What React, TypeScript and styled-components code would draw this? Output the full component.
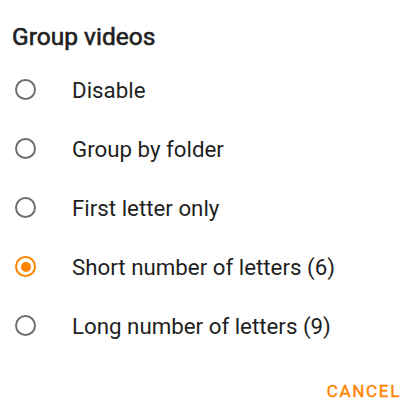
import React, { useState } from "react";
import styled, { createGlobalStyle } from "styled-components";

const Global = createGlobalStyle`
  html, body { margin: 0; padding: 0; background: #ffffff; }
  body { font-family: Roboto, "Noto Sans", "Liberation Sans", sans-serif; }
`;

const Dialog = styled.div`
  width: 409px;
  height: 415px;
  background: #ffffff;
  display: flex;
  flex-direction: column;
  box-sizing: border-box;
  padding-top: 23px;
`;

const Title = styled.h2`
  margin: 0 0 9px 0;
  padding: 0 12px;
  font-family: Roboto, "Noto Sans", sans-serif;
  font-size: 24.5px;
  line-height: 28px;
  font-weight: 400;
  -webkit-text-stroke: 0.6px #1f1f1f;
  color: #1f1f1f;
`;

const List = styled.div`
  display: flex;
  flex-direction: column;
`;

const Row = styled.label`
  display: flex;
  align-items: center;
  height: 59px;
  padding-left: 15px;
  gap: 36px;
  cursor: pointer;
`;

const Radio = styled.span<{ $checked: boolean }>`
  width: 21px;
  height: 21px;
  box-sizing: border-box;
  border-radius: 50%;
  border: 2px solid ${(p) => (p.$checked ? "#ff8400" : "#6e6e6e")};
  display: flex;
  align-items: center;
  justify-content: center;
  flex-shrink: 0;
  &::after {
    content: "";
    width: 10px;
    height: 10px;
    border-radius: 50%;
    background: #ff8400;
    display: ${(p) => (p.$checked ? "block" : "none")};
  }
`;

const Label = styled.span`
  font-size: 22.3px;
  line-height: 26px;
  color: #1f1f1f;
`;

const Footer = styled.div`
  display: flex;
  justify-content: flex-end;
  align-items: center;
  height: 48px;
  margin-top: 12px;
  padding-right: 8px;
`;

const Button = styled.button`
  border: none;
  background: transparent;
  padding: 0;
  font-family: Roboto, "Noto Sans", sans-serif;
  font-size: 17px;
  font-weight: 400;
  -webkit-text-stroke: 0.45px #ff8400;
  letter-spacing: 1.7px;
  color: #ff8400;
  text-transform: uppercase;
  cursor: pointer;
`;

const options = [
  "Disable",
  "Group by folder",
  "First letter only",
  "Short number of letters (6)",
  "Long number of letters (9)",
];

export default function App() {
  const [selected, setSelected] = useState(3);
  return (
    <>
      <Global />
      <Dialog>
        <Title>Group videos</Title>
        <List>
          {options.map((o, i) => (
            <Row key={o} onClick={() => setSelected(i)}>
              <Radio $checked={selected === i} />
              <Label>{o}</Label>
            </Row>
          ))}
        </List>
        <Footer>
          <Button>Cancel</Button>
        </Footer>
      </Dialog>
    </>
  );
}
